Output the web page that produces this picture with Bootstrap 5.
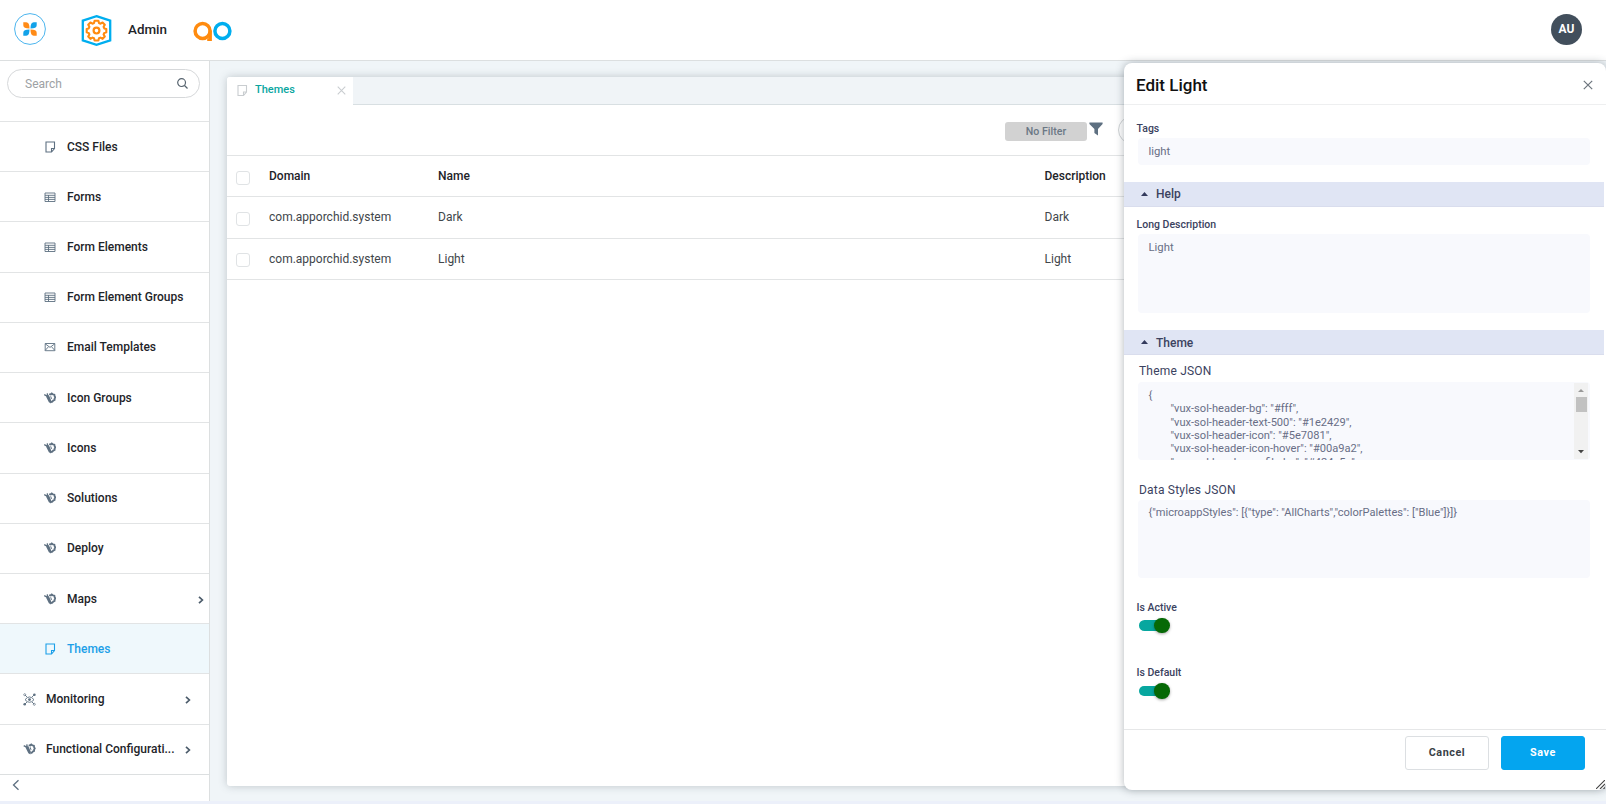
<!DOCTYPE html>
<html lang="en">
<head>
    <meta charset="UTF-8">
    <meta name="viewport" content="width=device-width, initial-scale=1">
    <title>Admin - Themes</title>

    <!-- Bootstrap CSS -->
    <link href="https://cdn.jsdelivr.net/npm/bootstrap@5.3.0/dist/css/bootstrap.min.css" rel="stylesheet">

    <style>
        body { font-family: Roboto, "Liberation Sans", sans-serif; font-size: 12px; line-height: 16px; background: #ecf0fa; color: #1e2429; height: 804px; overflow: hidden; }
        svg { display: block; flex: none; }

        .top-bar { height: 61px; border-bottom: 1px solid #dcdfe0; padding: 0 24px 2px 14px; }
        .admin-icon { margin: 3px 0 0 35px; }
        .app-title { font-size: 13.4px; margin-left: 16px; width: 65px; padding-top: 2px; }
        .avatar { width: 31px; height: 31px; background: #424f5c; font-size: 12px; }

        .workspace { height: 740px; background: #f0f5f8; }
        .side-bar { width: 210px; border-right: 1px solid #dcdfe0; }
        .search-box { height: 29px; margin: 8px 9px 23px 7px; padding: 0 11px 0 17px; border: 1px solid #d6d8da; color: #9da1a4; }
        .side-item { height: 50.23px; border-top: 1.4px solid #e2e4e5; padding: 0 5px 0 44px; color: #5e7081; white-space: nowrap; }
        .side-item span { color: #1e2429; margin-left: 11px; }
        .side-item.top-level { padding: 0 18px 0 23px; }
        .side-item.top-level span { margin-left: 10px; }
        .side-item.current, .side-item.current span { background-color: #eff8fc; color: #1c9fe8; }
        .side-item .ms-auto { margin-top: 2px; }
        .side-foot { border-top: 1px solid #dcdfe0; padding: 4px 0 0 12px; color: #5e7081; }

        .sheet { margin: 16px 0 15px 17px; border-radius: 3px; box-shadow: 0 0 8px rgba(60, 75, 85, .28); }
        .tab-strip { height: 28px; background: #f0f4f7; border-radius: 3px 0 0 0; }
        .open-tab { width: 126px; color: #0aa69f; font-size: 11px; padding: 0 7px 0 9px; border-radius: 3px 0 0 0; }
        .open-tab span { padding-bottom: 2px; margin-left: 7px; }
        .open-tab svg { color: #c9cdd0; margin-bottom: 2px; }
        .tab-rest { border-bottom: 1.5px solid #d8dfe2; }
        .tool-row { height: 50px; padding-left: 778px; }
        .no-filter { width: 82px; height: 19px; background: #d2d2d2; color: #6b7885; font-size: 10.6px; border-radius: 3px; margin-top: 2px; padding-top: 1px; }
        .funnel { margin: 0 0 3px 1.5px; }
        .tool-circle { width: 28px; height: 28px; border: 1px solid #d0d3d5; margin-left: 15px; }
        .data-row { display: grid; grid-template-columns: 42px 169px 606.5px 1fr; height: 41.5px; border-top: 1.3px solid #e2e4e5; align-items: center; color: #41464b; }
        .data-row.heads { height: 41px; color: #1e2429; }
        .data-row.last-row { border-bottom: 1.3px solid #e2e4e5; height: 42.5px; }
        .tick { width: 14px; height: 14px; border: 1px solid #e0e3e5; border-radius: 3px; margin: 3px 0 0 9px; }

        .drawer { position: absolute; left: 1124px; top: 63px; width: 482px; height: 727px; border-radius: 8px; box-shadow: 0 0 9px rgba(50, 60, 70, .38); z-index: 2; color: #3b4260; }
        .drawer-head { height: 42px; border-bottom: 1.6px solid #eeeff0; font-size: 17px; color: #111; padding: 3px 13px 0 12px; }
        .drawer-body { padding: 15px 2px 0 0; height: 624px; }
        .field-label { font-size: 10.5px; font-weight: 500; height: 16px; padding: 1px 0 0 12.5px; }
        .field-title { letter-spacing: .2px; height: 16px; padding-left: 15px; }
        .field-box { background: #f8f9fd; border-radius: 4px; margin: 2px 14px 0; padding: 6px 10.5px; color: #686e86; font-size: 11.3px; height: 78.5px; overflow: hidden; }
        .field-box.one-line { height: 27px; }
        .code-text { font-size: 11.1px; line-height: 13.4px; white-space: pre; tab-size: 22px; }
        .code-box { padding: 6.5px 10.5px; margin-top: 2.5px; }
        .code-box.scrolled { padding: 0 2px 0 10.5px; }
        .scrolled .code-text { padding-top: 7.3px; }
        .fold-bar { height: 25px; background: #e0e5f4; border-bottom: 1px solid #d9dded; padding-left: 16.5px; margin: 16.5px 0 9.5px; }
        .fold-bar.tight { margin-bottom: 8px; margin-top: 17.5px; }
        .fold-bar span { margin-left: 8.5px; padding-top: 1px; }
        .data-title { margin-top: 21px; padding-top: .5px; }
        .flag-label { margin-top: 20.5px; }
        .flag-label.next-flag { margin-top: 33.5px; }
        .scroller { width: 14px; height: 76px; margin-top: 1px; background: #f1f1f1; }
        .scroll-thumb { width: 11px; height: 15px; background: #c1c1c1; }
        .switch-on { width: 27px; height: 10.5px; background: #07a79f; border-radius: 6px; margin: 5.5px 0 0 15px; }
        .switch-knob { width: 15.5px; height: 15.5px; background: #066906; margin-right: -3.5px; box-shadow: 0 1px 3px rgba(0, 0, 0, .35); }
        .drawer-foot { border-top: 1.4px solid #e6e7e8; padding: 6px 21px 0 0; height: 61px; }
        .foot-btn { width: 84px; height: 34px; padding: 0; font-size: 10.8px; font-weight: 700; letter-spacing: .55px; border-radius: 3px; border: 1px solid #dcdfe2; color: #3a3f47; }
        .foot-btn.save-btn { background: #04a5ef; border-color: #04a5ef; color: #fff; }
        .grip { position: absolute; right: 1px; bottom: 1px; }
    </style>
</head>
<body>
    <!-- Shared icons -->
    <svg class="d-none">
        <symbol id="i-note" viewBox="0 0 12 12"><path d="M2 1h8.5v6.5L7.5 11H2zM10.5 7.5h-3V11" fill="none" stroke="currentColor" stroke-width="1.1"/></symbol>
        <symbol id="i-form" viewBox="0 0 12 12"><path d="M1 2h10v8.5H1zM1 4.3h10M1 6.4h10M1 8.4h10M4.5 4v6.5" fill="none" stroke="currentColor" stroke-width=".9"/></symbol>
        <symbol id="i-mail" viewBox="0 0 12 12"><path d="M1.2 2.5h9.6v7.2H1.2zM1.2 2.8L6 6.4l4.8-3.6M1.2 9.4l3.3-3.7M10.8 9.4L7.5 5.7" fill="none" stroke="currentColor" stroke-width=".9"/></symbol>
        <symbol id="i-tool" viewBox="0 0 12 12"><path d="M.2 2.6L3.6 4.4M3.3 1.3l.4 3.2" fill="none" stroke="currentColor" stroke-width="1.4"/><path d="M2 4.4l2.8-1.3 2.3 5.1-.2 3.4-2-1.3z" fill="currentColor"/><path d="M5.2 2.1l1.6.4 1-1 1.2.9 1.4.3.2 1.4.7 1.3-.7 1.2v1.4l-1.4.6-.9 1.1-1.4.5" fill="none" stroke="currentColor" stroke-width="1.8"/><path d="M6.7 4.3l.8 2.6" stroke="currentColor"/></symbol>
        <symbol id="i-eye" viewBox="0 0 13 13"><path d="M2 6.7q4.5-5.5 9 0q-4.5 5.2-9 0zM2 2l2 2M11 2L9 4M2 11l2-2M11 11L9 9" fill="none" stroke="currentColor" stroke-width=".9"/><circle cx="6.5" cy="6.6" r="1.4" fill="currentColor"/><g fill="currentColor"><circle cx="11.4" cy="1.7" r="1.3"/><circle cx="1.7" cy="11.3" r="1.3"/></g><g fill="none" stroke="currentColor" stroke-width=".7"><circle cx="1.7" cy="1.7" r="1"/><circle cx="11.3" cy="11.3" r="1"/></g></symbol>
        <symbol id="i-next" viewBox="0 0 6 8"><path d="M1 .8L4.4 4 1 7.2" fill="none" stroke="#4c5c6b" stroke-width="1.7"/></symbol>
        <symbol id="i-close" viewBox="0 0 10 10"><path d="M.8.8l8.4 8.4M9.2.8L.8 9.2" fill="none" stroke="currentColor" stroke-width="1.2"/></symbol>
    </svg>

    <!-- Header -->
    <header class="top-bar bg-white d-flex align-items-center">
        <svg width="32" height="32" viewBox="0 0 32 32">
            <circle cx="16" cy="16" r="15.4" fill="#fff" stroke="#4cb5ee"/>
            <path d="M9.3 9.3h3q3.2 0 3.2 6.2q-6.2 0-6.2-3.2zM22.7 22.7h-3q-3.2 0-3.2-6.2q6.2 0 6.2 3.2z" fill="#ff8b17"/>
            <path d="M22.7 9.3v3q0 3.2-6.2 3.2q0-6.2 3.2-6.2zM9.3 22.7v-3q0-3.2 6.2-3.2q0 6.2-3.2 6.2z" fill="#12a2e9"/>
        </svg>
        <svg class="admin-icon" width="31" height="31" viewBox="0 0 31 31">
            <path d="M15.5 1.2L29.2 5.6v19.8L15.5 29.8 1.8 25.4V5.6z" fill="none" stroke="#00aeef" stroke-width="2.3"/>
            <path d="M13.6 5.7h3.8l.6 2.4 1.5.6 2.1-1.2 2.2 2.2-1.2 2.1.7 1.6 2 .5v3.4l-2 .6-.7 1.6 1.2 2.1-2.2 2.2-2.1-1.2-1.5.6-.6 2.3h-3.8l-.6-2.3-1.5-.6-2.1 1.2-2.2-2.2 1.2-2.1-.7-1.6-2-.6v-3.4l2-.5.7-1.6-1.2-2.1 2.2-2.2 2.1 1.2 1.5-.6z" fill="none" stroke="#ff8b0f" stroke-width="2.1" stroke-linejoin="round"/>
            <circle cx="15.5" cy="15.6" r="2.9" fill="none" stroke="#ff8b0f" stroke-width="2.2"/>
        </svg>
        <span class="app-title fw-medium">Admin</span>
        <svg width="39" height="20" viewBox="0 0 39 20" class="mt-1">
            <circle cx="9.6" cy="10" r="7.5" fill="none" stroke="#ff8b0f" stroke-width="3.5"/>
            <path d="M17.2 9.5V19h-3" fill="none" stroke="#ff8b0f" stroke-width="3.4"/>
            <circle cx="29.4" cy="10" r="7.5" fill="none" stroke="#00aeef" stroke-width="3.5"/>
        </svg>
        <div class="avatar rounded-circle text-white fw-bold d-flex align-items-center justify-content-center ms-auto">AU</div>
    </header>

    <div class="workspace d-flex">
        <!-- Sidebar -->
        <nav class="side-bar bg-white flex-shrink-0">
            <div class="search-box rounded-pill d-flex align-items-center justify-content-between">
                Search
                <svg width="11" height="11" viewBox="0 0 11 11" fill="none" stroke="#56636e" stroke-width="1.2"><circle cx="4.6" cy="4.6" r="3.9"/><path d="M7.5 7.5l3 3"/></svg>
            </div>
            <div class="side-item fw-medium d-flex align-items-center"><svg width="12" height="12"><use href="#i-note"/></svg><span>CSS Files</span></div>
            <div class="side-item fw-medium d-flex align-items-center"><svg width="12" height="12"><use href="#i-form"/></svg><span>Forms</span></div>
            <div class="side-item fw-medium d-flex align-items-center"><svg width="12" height="12"><use href="#i-form"/></svg><span>Form Elements</span></div>
            <div class="side-item fw-medium d-flex align-items-center"><svg width="12" height="12"><use href="#i-form"/></svg><span>Form Element Groups</span></div>
            <div class="side-item fw-medium d-flex align-items-center"><svg width="12" height="12"><use href="#i-mail"/></svg><span>Email Templates</span></div>
            <div class="side-item fw-medium d-flex align-items-center"><svg width="12" height="12"><use href="#i-tool"/></svg><span>Icon Groups</span></div>
            <div class="side-item fw-medium d-flex align-items-center"><svg width="12" height="12"><use href="#i-tool"/></svg><span>Icons</span></div>
            <div class="side-item fw-medium d-flex align-items-center"><svg width="12" height="12"><use href="#i-tool"/></svg><span>Solutions</span></div>
            <div class="side-item fw-medium d-flex align-items-center"><svg width="12" height="12"><use href="#i-tool"/></svg><span>Deploy</span></div>
            <div class="side-item fw-medium d-flex align-items-center"><svg width="12" height="12"><use href="#i-tool"/></svg><span>Maps</span><svg class="ms-auto" width="6" height="8"><use href="#i-next"/></svg></div>
            <div class="side-item current fw-medium d-flex align-items-center"><svg width="12" height="12"><use href="#i-note"/></svg><span>Themes</span></div>
            <div class="side-item top-level fw-medium d-flex align-items-center"><svg width="13" height="13"><use href="#i-eye"/></svg><span>Monitoring</span><svg class="ms-auto" width="6" height="8"><use href="#i-next"/></svg></div>
            <div class="side-item top-level fw-medium d-flex align-items-center"><svg width="13" height="12"><use href="#i-tool"/></svg><span>Functional Configurati...</span><svg class="ms-auto" width="6" height="8"><use href="#i-next"/></svg></div>
            <div class="side-foot"><svg width="8" height="12" viewBox="0 0 8 12"><path d="M6.5 1.2L1.5 6l5 4.8" fill="none" stroke="currentColor" stroke-width="1.3"/></svg></div>
        </nav>

        <!-- Themes list -->
        <main class="sheet bg-white flex-grow-1">
            <div class="tab-strip d-flex">
                <div class="open-tab bg-white fw-medium d-flex align-items-center">
                    <svg width="12" height="13"><use href="#i-note"/></svg>
                    <span>Themes</span>
                    <svg width="9" height="9" class="ms-auto"><use href="#i-close"/></svg>
                </div>
                <div class="tab-rest flex-grow-1"></div>
            </div>
            <div class="tool-row d-flex align-items-center">
                <div class="no-filter fw-medium d-flex align-items-center justify-content-center">No Filter</div>
                <svg class="funnel" width="14" height="14" viewBox="0 0 14 14"><path d="M.4.5h13.2v1.6L9 7v6.5L5.4 11V7L.4 2.1z" fill="#5e7081"/></svg>
                <div class="tool-circle rounded-circle"></div>
            </div>
            <div class="data-row heads fw-medium"><div class="tick"></div><div>Domain</div><div>Name</div><div>Description</div></div>
            <div class="data-row"><div class="tick"></div><div>com.apporchid.system</div><div>Dark</div><div>Dark</div></div>
            <div class="data-row last-row"><div class="tick"></div><div>com.apporchid.system</div><div>Light</div><div>Light</div></div>
        </main>
    </div>

    <!-- Edit drawer -->
    <aside class="drawer bg-white d-flex flex-column">
        <div class="drawer-head fw-medium d-flex align-items-center justify-content-between">
            Edit Light
            <svg width="10" height="10" class="text-secondary"><use href="#i-close"/></svg>
        </div>
        <div class="drawer-body flex-fill">
            <div class="field-label">Tags</div>
            <div class="field-box one-line">light</div>
            <div class="fold-bar fw-medium d-flex align-items-center">
                <svg width="7" height="4"><path d="M0 4l3.5-4L7 4z" fill="#333a5c"/></svg><span>Help</span>
            </div>
            <div class="field-label">Long Description</div>
            <div class="field-box">Light</div>
            <div class="fold-bar tight fw-medium d-flex align-items-center">
                <svg width="7" height="4"><path d="M0 4l3.5-4L7 4z" fill="#333a5c"/></svg><span>Theme</span>
            </div>
            <div class="field-title">Theme JSON</div>
            <div class="field-box code-box scrolled d-flex justify-content-between">
                <div class="code-text">{
	"vux-sol-header-bg": "#fff",
	"vux-sol-header-text-500": "#1e2429",
	"vux-sol-header-icon": "#5e7081",
	"vux-sol-header-icon-hover": "#00a9a2",
	"vux-sol-header-profile-bg": "#424e5a",</div>
                <div class="scroller d-flex flex-column align-items-center">
                    <svg width="6" height="14"><path d="M0 9l3-3 3 3z" fill="#999"/></svg>
                    <div class="scroll-thumb"></div>
                    <svg class="mt-auto" width="6" height="11"><path d="M0 2l3 3.2L6 2z" fill="#444"/></svg>
                </div>
            </div>
            <div class="field-title data-title">Data Styles JSON</div>
            <div class="field-box code-box code-text">{"microappStyles": [{"type": "AllCharts","colorPalettes": ["Blue"]}]}</div>
            <div class="field-label flag-label">Is Active</div>
            <div class="switch-on d-flex align-items-center justify-content-end"><div class="switch-knob rounded-circle"></div></div>
            <div class="field-label flag-label next-flag">Is Default</div>
            <div class="switch-on d-flex align-items-center justify-content-end"><div class="switch-knob rounded-circle"></div></div>
        </div>
        <div class="drawer-foot flex-shrink-0 d-flex justify-content-end align-items-start">
            <button class="btn foot-btn me-2" type="button">Cancel</button>
            <button class="btn foot-btn save-btn ms-1" type="button">Save</button>
        </div>
        <svg class="grip" width="9" height="9"><path d="M0 9l9-9M4 9l5-5M7.5 9L9 7.5" stroke="#444" stroke-width="1.1"/></svg>
    </aside>

    <script src="https://cdn.jsdelivr.net/npm/bootstrap@5.3.0/dist/js/bootstrap.bundle.min.js"></script>
</body>
</html>
